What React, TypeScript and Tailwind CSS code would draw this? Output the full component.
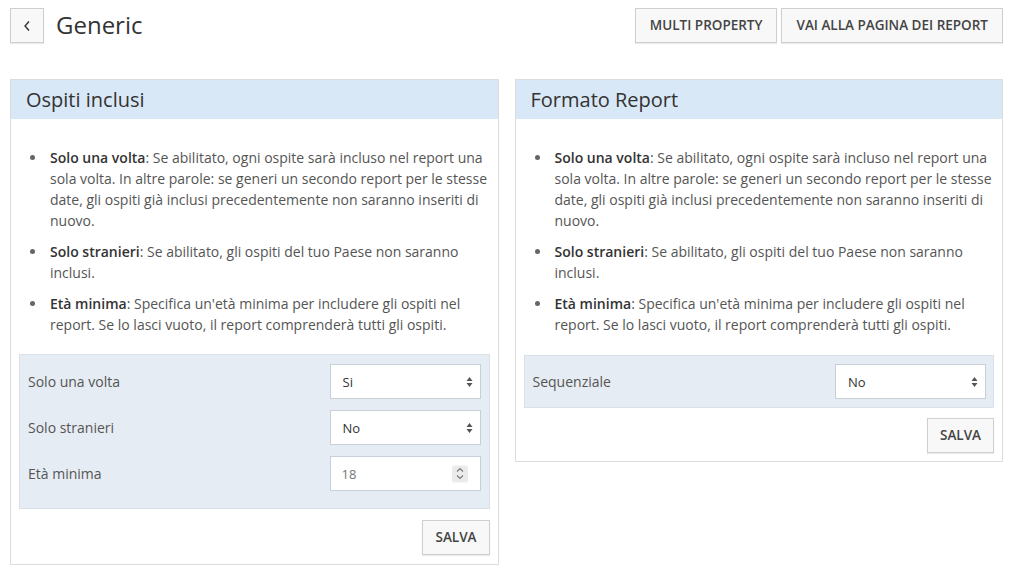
import type { ReactNode } from 'react';

const font = { fontFamily: '"Open Sans", "Liberation Sans", sans-serif' };

function SelectArrows() {
  return (
    <svg width="7" height="11" viewBox="0 0 7 11" className="absolute right-[7px] top-1/2 -translate-y-1/2">
      <path d="M3.5 0.5 L6.5 4.5 L0.5 4.5 Z" fill="#555" />
      <path d="M3.5 10.5 L6.5 6.5 L0.5 6.5 Z" fill="#555" />
    </svg>
  );
}

function FakeSelect({ value }: { value: string }) {
  return (
    <div className="relative w-[151px] h-[35px] bg-white border border-[#c9cfd6] flex items-center pl-[12px] text-[13px] text-[#333] pt-[2px]">
      {value}
      <SelectArrows />
    </div>
  );
}

function FakeNumber({ value }: { value: string }) {
  return (
    <div className="relative w-[151px] h-[35px] bg-white border border-[#c9cfd6] flex items-center pl-[11px] text-[13px] text-[#777] pt-[2px]">
      {value}
      <div className="absolute right-[12px] top-1/2 -translate-y-1/2 w-[16px] h-[17px] bg-[#ebebeb] rounded-[2px] flex flex-col items-center justify-center gap-[2px]">
        <svg width="8" height="5" viewBox="0 0 8 5"><path d="M1 4 L4 1 L7 4" fill="none" stroke="#777" strokeWidth="1.1" /></svg>
        <svg width="8" height="5" viewBox="0 0 8 5"><path d="M1 1 L4 4 L7 1" fill="none" stroke="#777" strokeWidth="1.1" /></svg>
      </div>
    </div>
  );
}

function Button({ children, className = '' }: { children: ReactNode; className?: string }) {
  return (
    <button type="button" className={`h-[35px] bg-[#f8f8f8] border border-[#cfcfcf] shadow-[0_1px_1px_rgba(0,0,0,0.08)] text-[13.5px] font-semibold text-[#444] uppercase whitespace-nowrap ${className}`}>
      {children}
    </button>
  );
}

function Item({ term, children }: { term: string; children: ReactNode }) {
  return (
    <li className="flex">
      <span className="w-[20px] h-[21px] shrink-0 flex items-center">
        <span className="w-[5px] h-[5px] rounded-full bg-[#666]" />
      </span>
      <span>
        <b className="font-semibold text-[#333]">{term}</b>: {children}
      </span>
    </li>
  );
}

function Info() {
  return (
    <ul className="pl-[11px] text-[14px] leading-[21px] text-[#555] flex flex-col gap-[10px]">
      <Item term="Solo una volta">
        Se abilitato, ogni ospite sarà incluso nel report una sola volta. In altre parole: se generi un secondo report per le stesse date, gli ospiti già inclusi precedentemente non saranno inseriti di nuovo.
      </Item>
      <Item term="Solo stranieri">Se abilitato, gli ospiti del tuo Paese non saranno inclusi.</Item>
      <Item term="Età minima">
        Specifica un'età minima per includere gli ospiti nel report. Se lo lasci vuoto, il report comprenderà tutti gli ospiti.
      </Item>
    </ul>
  );
}

function Row({ label, children }: { label: string; children: ReactNode }) {
  return (
    <div className="flex items-center justify-between">
      <span className="text-[14px] text-[#555]">{label}</span>
      {children}
    </div>
  );
}

function Panel({ title, children }: { title: string; children: ReactNode }) {
  return (
    <div className="flex-1 border border-[#dcdcdc] bg-white">
      <div className="h-[39px] bg-[#d9e8f6] flex items-center pl-[15px] text-[20px] text-[#333]">{title}</div>
      <div className="px-[8px] pt-[28px]">{children}</div>
    </div>
  );
}

export default function App() {
  return (
    <div style={font} className="min-h-[566px] bg-white pl-[10px] pr-[9px] pt-[8px]">
      <div className="flex items-center justify-between">
        <div className="flex items-center gap-[12px]">
          <button type="button" className="w-[34px] h-[35px] bg-[#f8f8f8] border border-[#cfcfcf] shadow-[0_1px_1px_rgba(0,0,0,0.08)] flex items-center justify-center">
            <svg width="8" height="12" viewBox="0 0 8 12"><path d="M6 1.5 L2 6 L6 10.5" fill="none" stroke="#333" strokeWidth="1.4" /></svg>
          </button>
          <h1 className="text-[24px] text-[#333] leading-none -mt-[2px]">Generic</h1>
        </div>
        <div className="flex gap-[4px]">
          <Button className="px-[14px]">Multi Property</Button>
          <Button className="px-[14px]">Vai alla pagina dei report</Button>
        </div>
      </div>

      <div className="flex items-start gap-[16px] mt-[36px]">
        <Panel title="Ospiti inclusi">
          <Info />
          <div className="mt-[19px] bg-[#e6ecf3] border border-[#d9e0e8] pl-[8px] pr-[8px] pt-[9px] pb-[17px] flex flex-col gap-[11px]">
            <Row label="Solo una volta"><FakeSelect value="Si" /></Row>
            <Row label="Solo stranieri"><FakeSelect value="No" /></Row>
            <Row label="Età minima"><FakeNumber value="18" /></Row>
          </div>
          <div className="flex justify-end mt-[11px] pb-[9px]">
            <Button className="px-[12px]">Salva</Button>
          </div>
        </Panel>
        <Panel title="Formato Report">
          <Info />
          <div className="mt-[20px] bg-[#e6ecf3] border border-[#d9e0e8] pl-[8px] pr-[7px] pt-[8px] pb-[8px]">
            <Row label="Sequenziale"><FakeSelect value="No" /></Row>
          </div>
          <div className="flex justify-end mt-[10px] pb-[8px]">
            <Button className="px-[12px]">Salva</Button>
          </div>
        </Panel>
      </div>
    </div>
  );
}
